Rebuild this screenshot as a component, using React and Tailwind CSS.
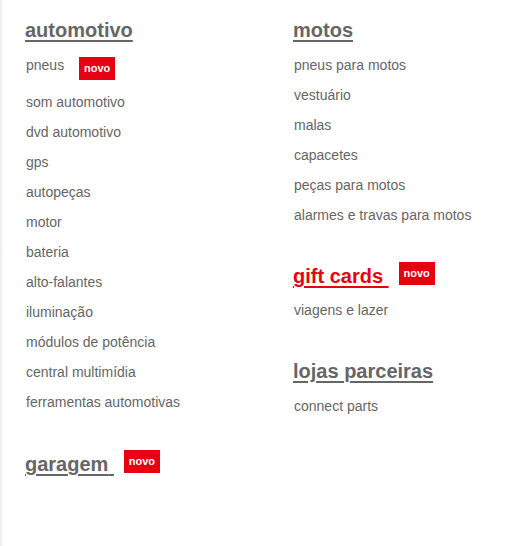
import React from 'react';

const Novo = ({ className = '' }) => (
  <span
    className={`inline-flex h-[23px] w-[36px] items-center justify-center bg-[#e60012] text-[11px] font-bold leading-none text-white ${className}`}
  >
    novo
  </span>
);

const Heading = ({ children, red, badge }) => (
  <div className="flex h-[24px] items-center">
    <a
      href="#"
      className={`text-[20px] font-bold leading-[24px] underline decoration-[2px] underline-offset-[3px] ${
        red ? 'text-[#e60012]' : 'text-[#666]'
      }`}
    >
      {children}
      {badge && '\u00a0'}
    </a>
    {badge && <Novo className="ml-[10px] -mt-[6px]" />}
  </div>
);

const Item = ({ children, badge }) => (
  <li className={`flex items-start ${badge ? 'h-[37px]' : 'h-[30px]'}`}>
    <a href="#" className="ml-[1px] text-[14px] leading-[30px] text-[#666]">
      {children}
    </a>
    {badge && <Novo className="ml-[15px] mt-[7px]" />}
  </li>
);

const automotivo = [
  'som automotivo',
  'dvd automotivo',
  'gps',
  'autopeças',
  'motor',
  'bateria',
  'alto-falantes',
  'iluminação',
  'módulos de potência',
  'central multimídia',
  'ferramentas automotivas',
];

const motos = [
  'pneus para motos',
  'vestuário',
  'malas',
  'capacetes',
  'peças para motos',
  'alarmes e travas para motos',
];

export default function App() {
  return (
    <div
      className="relative flex h-[546px] w-[520px] bg-white pl-[25px] pt-[18px]"
      style={{ fontFamily: '"Liberation Sans", Arial, sans-serif' }}
    >
      <div className="absolute inset-y-0 left-0 w-[4px] bg-gradient-to-r from-[#ececec] to-white" />

      {/* coluna esquerda */}
      <div className="w-[268px]">
        <Heading>automotivo</Heading>
        <ul className="mt-[8px]">
          <Item badge>pneus</Item>
          {automotivo.map((t) => (
            <Item key={t}>{t}</Item>
          ))}
        </ul>
        <div className="mt-[35px]">
          <Heading badge>garagem</Heading>
        </div>
      </div>

      {/* coluna direita */}
      <div className="w-[220px]">
        <Heading>motos</Heading>
        <ul className="mt-[8px]">
          {motos.map((t) => (
            <Item key={t}>{t}</Item>
          ))}
        </ul>
        <div className="mt-[34px]">
          <Heading red badge>gift cards</Heading>
        </div>
        <ul className="mt-[7px]">
          <Item>viagens e lazer</Item>
        </ul>
        <div className="mt-[34px]">
          <Heading>lojas parceiras</Heading>
        </div>
        <ul className="mt-[8px]">
          <Item>connect parts</Item>
        </ul>
      </div>
    </div>
  );
}
